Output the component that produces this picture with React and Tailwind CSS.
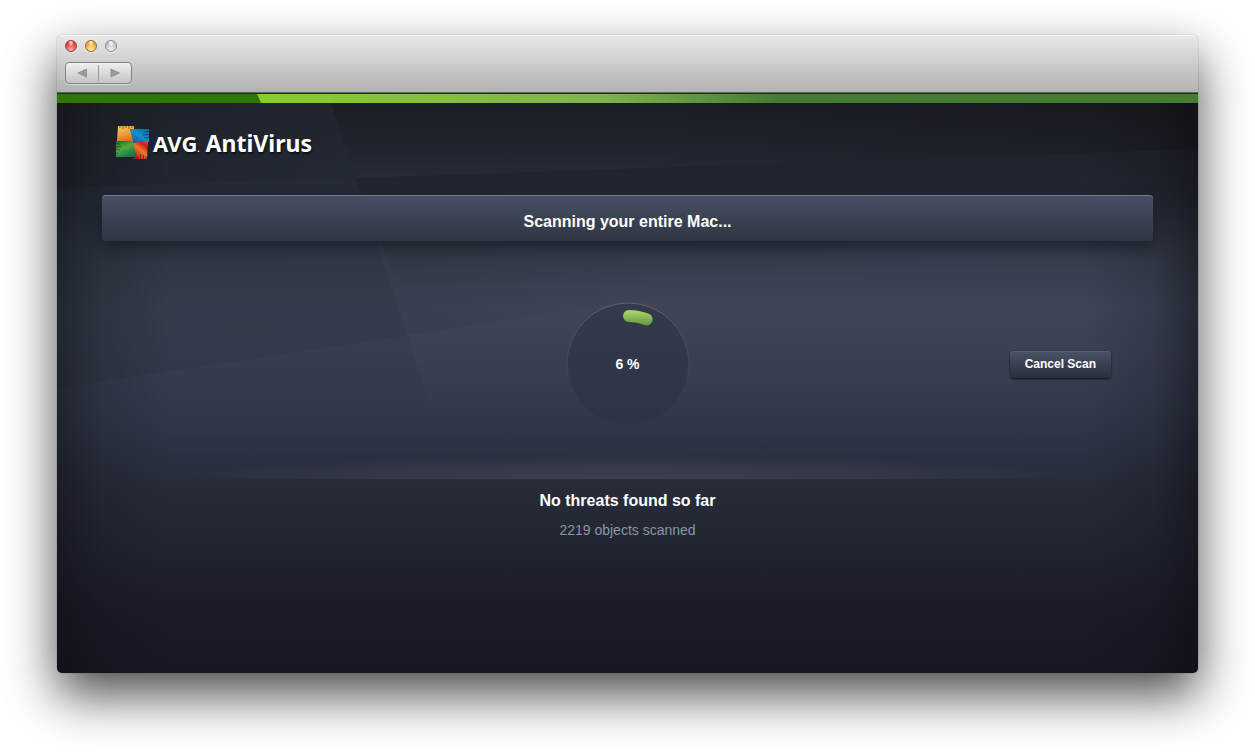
import React, { useState } from "react";

const RADIUS = 48;

const TrafficLights = () => (
  <div className="flex gap-2">
    <button
      aria-label="Close"
      className="size-3 rounded-full border border-[#9a3d3c] bg-[radial-gradient(ellipse_at_50%_12%,#ffe9e9_0%,#ffb0b060_30%,transparent_40%),radial-gradient(circle_at_50%_90%,#ffb4b0_0%,#f25a5c_45%,#c9262c_100%)] shadow-[0_1px_0_#ffffff80]"
    />
    <button
      aria-label="Minimize"
      className="size-3 rounded-full border border-[#96682a] bg-[radial-gradient(ellipse_at_50%_12%,#fff4e0_0%,#ffe0b060_30%,transparent_40%),radial-gradient(circle_at_50%_90%,#fff59a_0%,#f7bd55_45%,#d2831f_100%)] shadow-[0_1px_0_#ffffff80]"
    />
    <button
      aria-label="Zoom"
      className="size-3 rounded-full border border-[#8c8c8c] bg-[radial-gradient(ellipse_at_50%_12%,#ffffff_0%,#ffffff60_30%,transparent_40%),radial-gradient(circle_at_50%_90%,#f0f0f0_0%,#d2d2d2_45%,#aeaeae_100%)] shadow-[0_1px_0_#ffffff80]"
    />
  </div>
);

const NavButtons = () => (
  <div className="flex items-center w-[67px] h-[22px] rounded border border-[#848484] bg-linear-to-b from-[#f0f0f0] to-[#c4c4c4] shadow-[0_1px_0_#ffffff70]">
    <button aria-label="Back" className="flex-1 flex justify-center">
      <svg width="10" height="10" viewBox="0 0 10 10">
        <path d="M9.500 1v8L1 5z" fill="#9c9c9c" stroke="#7c7c7c" strokeWidth="0.6" />
      </svg>
    </button>
    <span className="w-px h-4 bg-[#9b9b9b]" />
    <button aria-label="Forward" className="flex-1 flex justify-center">
      <svg width="10" height="10" viewBox="0 0 10 10">
        <path d="M1 1v8l8.500-4z" fill="#9c9c9c" stroke="#7c7c7c" strokeWidth="0.6" />
      </svg>
    </button>
  </div>
);

const LogoMark = () => (
  <svg width="34" height="36" viewBox="0 0 34 36" aria-hidden="true">
    <defs>
      <linearGradient id="lg-yellow" x1="0.3" y1="0" x2="0.6" y2="1">
        <stop offset="0" stopColor="#f9c44a" />
        <stop offset="0.5" stopColor="#f29c3e" />
        <stop offset="1" stopColor="#dc641c" />
      </linearGradient>
      <linearGradient id="lg-blue" x1="1" y1="0" x2="0.2" y2="1">
        <stop offset="0" stopColor="#0b6ba6" />
        <stop offset="0.5" stopColor="#1590cc" />
        <stop offset="1" stopColor="#0a5b92" />
      </linearGradient>
      <linearGradient id="lg-green" x1="0" y1="0" x2="0.5" y2="1">
        <stop offset="0" stopColor="#1f6f2c" />
        <stop offset="0.5" stopColor="#55a83c" />
        <stop offset="1" stopColor="#127a52" />
      </linearGradient>
      <linearGradient id="lg-red" x1="1" y1="0" x2="0.3" y2="1">
        <stop offset="0" stopColor="#ef5a24" />
        <stop offset="0.25" stopColor="#c5201c" />
        <stop offset="0.55" stopColor="#f07a28" />
        <stop offset="1" stopColor="#c0141c" />
      </linearGradient>
    </defs>
    <path d="M3 1h16v3h-4l4 13-17-1z" fill="url(#lg-yellow)" />
    <path d="M15 4h19v13l-15 2z" fill="url(#lg-blue)" />
    <path d="M1 16l17 1 3 15H1z" fill="url(#lg-green)" />
    <path d="M18 18l15-2-1 18H17l4-2z" fill="url(#lg-red)" />
    <path
      d="M5 0v3M8 0v4M11 0v3M14 0v4M17 0v3"
      stroke="#20242c"
      strokeWidth="0.6"
    />
    <path
      d="M34 6.500l-5 .5M34 9.500l-6 .5M34 12.500l-5 .5"
      stroke="#20242c"
      strokeWidth="0.6"
    />
    <path
      d="M0 18.500l5 .5M0 21.500l6 .5M0 24.500l5 .5M0 28l3 .3"
      stroke="#20242c"
      strokeWidth="0.6"
    />
    <path
      d="M19.500 35v-3M22.500 35v-4M25.500 35v-6M28.500 35v-5M31 35v-4"
      stroke="#20242c"
      strokeWidth="0.6"
    />
  </svg>
);

// Large translucent facets behind the content
const Backdrop = () => (
  <svg
    className="absolute inset-0 size-full"
    viewBox="0 0 1141 570"
    preserveAspectRatio="none"
    aria-hidden="true"
  >
    <defs>
      <linearGradient id="bg-top" x1="0" y1="0" x2="0" y2="1">
        <stop offset="0" stopColor="#14171a" stopOpacity="0.5" />
        <stop offset="1" stopColor="#14171a" stopOpacity="0" />
      </linearGradient>
      <linearGradient id="bg-left" x1="0" y1="0" x2="1" y2="0">
        <stop offset="0" stopColor="#14171a" stopOpacity="0.3" />
        <stop offset="1" stopColor="#14171a" stopOpacity="0.05" />
      </linearGradient>
      <linearGradient id="bg-beam" x1="0" y1="0" x2="0" y2="1">
        <stop offset="0" stopColor="#1c2630" stopOpacity="0" />
        <stop offset="0.4" stopColor="#1c2630" stopOpacity="0.18" />
        <stop offset="0.8" stopColor="#1c2430" stopOpacity="0.12" />
        <stop offset="1" stopColor="#1c2430" stopOpacity="0" />
      </linearGradient>
      <linearGradient id="bg-wedge" x1="0" y1="0" x2="1" y2="0">
        <stop offset="0" stopColor="#1f2c30" stopOpacity="0.2" />
        <stop offset="0.6" stopColor="#1f2c30" stopOpacity="0.16" />
        <stop offset="1" stopColor="#1f2c30" stopOpacity="0" />
      </linearGradient>
      <linearGradient
        id="bg-band"
        gradientUnits="userSpaceOnUse"
        x1="760"
        y1="58"
        x2="764"
        y2="176"
      >
        <stop offset="0" stopColor="#14171a" stopOpacity="0.3" />
        <stop offset="1" stopColor="#14171a" stopOpacity="0" />
      </linearGradient>
      <linearGradient id="bg-right" x1="0" y1="0" x2="1" y2="0">
        <stop offset="0" stopColor="#0c0d10" stopOpacity="0" />
        <stop offset="1" stopColor="#0c0d10" stopOpacity="0.3" />
      </linearGradient>
    </defs>
    <path d="M0 0h274l104 317L0 330z" fill="url(#bg-beam)" />
    <path d="M0 100h307L354 130 600 130V195L0 285z" fill="url(#bg-wedge)" />
    <path d="M274 0h867v46L298 75z" fill="url(#bg-top)" />
    <path d="M0 0h274l24 75L0 85z" fill="url(#bg-left)" />
    <path d="M298 75L1141 46V180H340z" fill="url(#bg-band)" />
    <path d="M600 0h541v46L600 65z" fill="url(#bg-right)" />
  </svg>
);

const ScanProgress = ({ percent }) => {
  const length = 2 * Math.PI * RADIUS;
  return (
    <div
      role="progressbar"
      aria-label="Scan progress"
      aria-valuenow={percent}
      className="grid place-items-center"
    >
      <svg
        width="124"
        height="124"
        viewBox="0 0 124 124"
        className="col-start-1 row-start-1"
      >
        <defs>
          <linearGradient id="dial" x1="0" y1="0" x2="0" y2="1">
            <stop offset="0" stopColor="#343a4b" />
            <stop offset="1" stopColor="#2e3444" />
          </linearGradient>
          <linearGradient id="rim" x1="0" y1="0" x2="0" y2="1">
            <stop offset="0" stopColor="#5b6172" />
            <stop offset="0.6" stopColor="#454b5c" stopOpacity="0.5" />
            <stop offset="1" stopColor="#343a4a" stopOpacity="0" />
          </linearGradient>
          <linearGradient
            id="bar"
            gradientUnits="userSpaceOnUse"
            x1="0"
            y1="7"
            x2="0"
            y2="24"
          >
            <stop offset="0" stopColor="#b3dc6c" />
            <stop offset="1" stopColor="#5f9440" />
          </linearGradient>
        </defs>
        <circle cx="62" cy="62" r="61" fill="url(#dial)" stroke="url(#rim)" />
        <path
          d="M63 14a48 48 0 1 1 0 96a48 48 0 1 1 0-96"
          fill="none"
          stroke="url(#bar)"
          strokeWidth="12"
          strokeLinecap="round"
          strokeDasharray={`${(length * percent) / 100} ${length}`}
        />
      </svg>
      <span className="col-start-1 row-start-1 font-bold text-sm">
        {percent} %
      </span>
    </div>
  );
};

const App = () => {
  const [scan, setScan] = useState({ percent: 6, objects: 2219, active: true });

  return (
    <div className="min-h-screen bg-white px-[57px] pt-[35px] pb-[79px] font-['Liberation_Sans',Arial,sans-serif]">
      <div className="rounded-[5px] overflow-hidden shadow-[0_0_1px_#00000090,0_22px_50px_#000000b4]">
        <div className="flex flex-col gap-[10px] px-2 pt-[5px] pb-2 bg-linear-to-b from-[#e9e9e9] to-[#b2b2b2] border-b border-[#666] shadow-[inset_0_1px_0_#f6f6f6]">
          <TrafficLights />
          <NavButtons />
        </div>

        <div className="h-[10px] border-t border-[#143306] bg-[linear-gradient(to_right,#8acd2a_18%,#7fb350_48%,#477c31_63%)]">
          <div className="w-[204px] h-full bg-[#2f7508] [clip-path:polygon(0_0,200px_0,100%_100%,0_100%)]" />
        </div>

        <main className="relative text-white bg-[linear-gradient(to_bottom,#21252e_0%,#262b36_15%,#363b4b_25%,#3d4557_36%,#3b4054_44%,#343a4c_53%,#2b3041_62%,#282c39_67%,#222633_77%,#191b26_90%,#161822_100%)]">
          <Backdrop />
          <div className="absolute inset-0 bg-[linear-gradient(to_right,#0a0b0e70,#0a0b0e28_4%,transparent_10%,transparent_90%,#0a0b0e28_96%,#0a0b0e80)]" />

          <div className="relative pt-[22px] pb-[133px]">
            <h1 className="flex items-center gap-1 px-[58px] h-9 font-['Noto_Sans','Open_Sans',sans-serif] font-bold text-[23px] leading-9 [text-shadow:1px_2px_2px_#000000a0]">
              <LogoMark />
              <span className="text-[22px]">
                AVG<span className="text-[8px] leading-none">.</span>
              </span>
              <span className="pl-0.5">AntiVirus</span>
            </h1>

            <h2 className="mx-[45px] mt-[34px] h-[46px] pt-2 flex items-center justify-center rounded bg-linear-to-b from-[#475064] to-[#2f3542] shadow-[inset_0_1px_0_#70778a,0_6px_14px_#10131c90] font-bold text-base">
              Scanning your entire Mac...
            </h2>

            <div className="grid grid-cols-[1fr_auto_1fr] items-center px-[87px] pt-[61px] pb-[53px]">
              <div />
              <ScanProgress percent={scan.percent} />
              <button
                className="justify-self-end h-[27px] px-[15px] rounded font-bold text-xs bg-linear-to-b from-[#4a5367] to-[#292e3a] shadow-[0_1px_2px_#0c0e14,inset_0_1px_0_#596176]"
                disabled={!scan.active}
                onClick={() => setScan({ ...scan, active: false })}
              >
                Cancel Scan
              </button>
            </div>

            <div className="mx-[110px] -mt-6 h-6 bg-[radial-gradient(ellipse_50%_100%_at_50%_100%,#4a4c5ba0_0%,#44475670_50%,transparent_100%)]" />

            <div className="flex flex-col items-center gap-[7px] pt-[10px] text-center">
              <p className="font-bold text-base">No threats found so far</p>
              <p className="text-sm leading-5 text-[#8b95a3]">
                {scan.objects} objects scanned
              </p>
            </div>
          </div>
        </main>
      </div>
    </div>
  );
};

export default App;
